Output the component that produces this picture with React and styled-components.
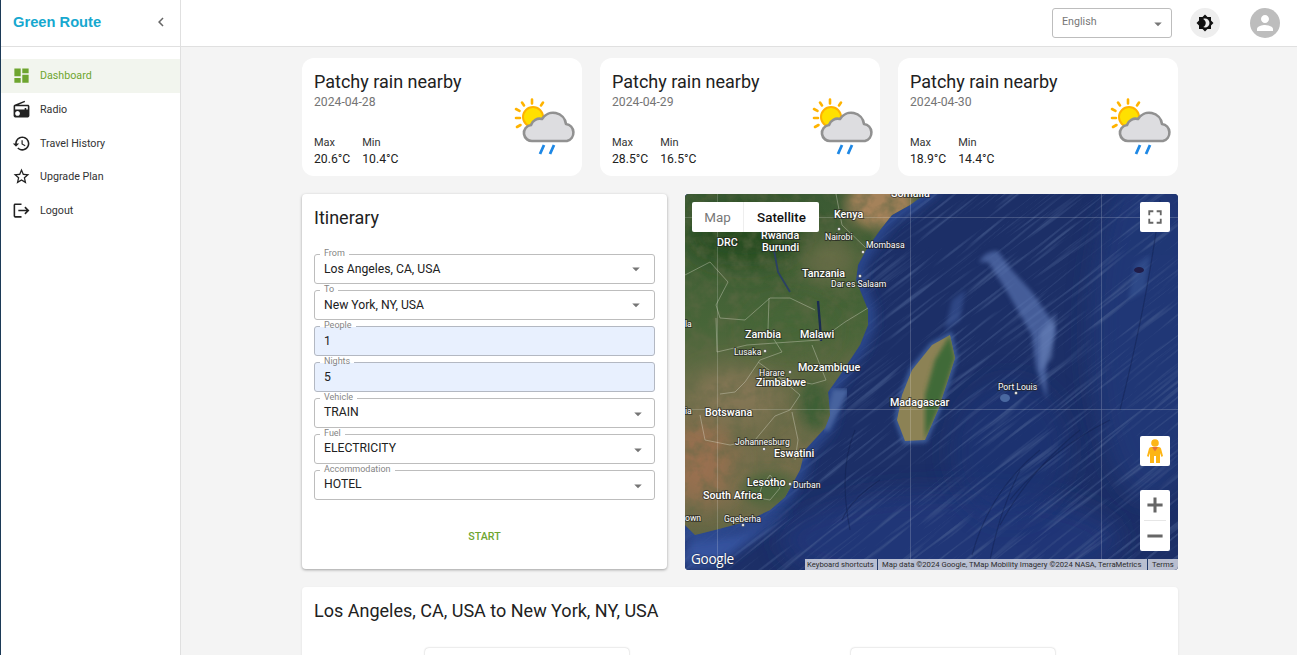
import { styled, createGlobalStyle } from 'styled-components';

const GlobalStyle = createGlobalStyle`
  html, body {
    margin: 0;
    height: 100%;
    overflow: hidden;
    background: #f4f4f4;
    font-family: Roboto, "Liberation Sans", sans-serif;
    color: #212121;
  }
  * { box-sizing: border-box; }
`;

const Shell = styled.div`
  display: flex;
  height: 655px;
  overflow: hidden;
`;

const Sidebar = styled.aside`
  flex: 0 0 181px;
  height: 100%;
  background: #fff;
  border-left: 1px solid #1c3a57;
  border-right: 1px solid #e0e0e0;
`;

const Brand = styled.div`
  display: flex;
  align-items: center;
  justify-content: space-between;
  height: 47px;
  padding: 0 10px 3px 12px;
  border-bottom: 1px solid #e0e0e0;
`;

const BrandName = styled.span`
  font-family: "Liberation Sans", Arial, sans-serif;
  font-size: 14.7px;
  font-weight: 700;
  color: #17a8cf;
`;

const Nav = styled.nav`
  padding-top: 12px;
`;

const NavItem = styled.div`
  display: flex;
  align-items: center;
  gap: 9px;
  height: 34px;
  padding: 0 0 2px 11px;
  font-size: 10.7px;
  color: ${(p) => (p.$active ? '#6ea52f' : '#333')};
  background: ${(p) => (p.$active ? '#f2f5ee' : 'transparent')};
  margin-bottom: ${(p) => (p.$tight ? '-1px' : '0')};
`;

const Icon = styled.svg`
  display: block;
  flex: none;
  fill: ${(p) => p.$color || 'currentColor'};
`;

const Column = styled.div`
  flex: 1;
  min-width: 0;
  display: flex;
  flex-direction: column;
`;

const TopBar = styled.header`
  flex: none;
  display: flex;
  justify-content: flex-end;
  align-items: flex-start;
  height: 47px;
  padding: 8px 17px 0 0;
  background: #fff;
  border-bottom: 1px solid #e0e0e0;
`;

const LangSelect = styled.div`
  display: flex;
  justify-content: space-between;
  width: 120px;
  height: 30px;
  padding: 6px 4px 0 9px;
  border: 1px solid #bdbdbd;
  border-radius: 3px;
  font-size: 10.7px;
  color: #777;
  line-height: 13px;
`;

const RoundButton = styled.div`
  display: flex;
  align-items: center;
  justify-content: center;
  width: 30px;
  height: 30px;
  margin-left: ${(p) => p.$gap};
  border-radius: 50%;
  background: ${(p) => p.$bg};
`;

const Content = styled.main`
  flex: 1;
  width: 876px;
  margin: 0 auto;
  padding: 11px 0 0 2px;
  box-sizing: content-box;
`;

const WeatherRow = styled.div`
  display: grid;
  grid-template-columns: repeat(3, 280px);
  gap: 18px;
`;

const WeatherCard = styled.div`
  display: flex;
  justify-content: space-between;
  height: 118px;
  padding: 12px 5px 0 12px;
  background: #fff;
  border-radius: 12px;
`;

const WeatherTitle = styled.div`
  font-size: 18px;
  line-height: 24px;
  color: #212121;
`;

const WeatherDate = styled.div`
  font-size: 12.2px;
  line-height: 16px;
  color: #757575;
`;

const Temps = styled.div`
  display: flex;
  gap: 12px;
  margin-top: 26px;
  font-size: 12.2px;
`;

const TempLabel = styled.div`
  font-size: 11px;
  line-height: 13px;
  color: #333;
`;

const TempValue = styled.div`
  margin-top: 3px;
  line-height: 15px;
  color: #212121;
`;

const WeatherArt = styled.svg`
  flex: none;
  margin-top: 26px;
`;

const MiddleRow = styled.div`
  display: flex;
  gap: 18px;
  margin-top: 18px;
`;

const ItineraryCard = styled.section`
  flex: 0 0 365px;
  height: 375px;
  padding: 12px;
  background: #fff;
  border-radius: 4px;
  box-shadow: 0 1px 3px rgba(0, 0, 0, 0.35);
`;

const CardTitle = styled.h2`
  margin: 0;
  font-size: 18px;
  font-weight: 400;
  line-height: 24px;
  color: #212121;
`;

const Fields = styled.div`
  display: flex;
  flex-direction: column;
  gap: 6px;
  margin-top: 24px;
`;

const Field = styled.div`
  position: relative;
  display: flex;
  align-items: center;
  justify-content: space-between;
  height: 30px;
  padding: ${(p) => (p.$compact ? '0 7px 3px 9px' : '0 9px 0 9px')};
  border: 1px solid ${(p) => (p.$filled ? '#b3b8c2' : '#bdbdbd')};
  border-radius: 3px;
  background: ${(p) => (p.$filled ? '#e8f0fe' : '#fff')};
  font-size: 12.2px;
  color: #212121;
`;

const FieldLabel = styled.span`
  position: absolute;
  left: 5px;
  top: -7px;
  padding: 0 4px;
  font-size: 9px;
  line-height: 11px;
  color: #858585;
  background: linear-gradient(#fff 0 7px, ${(p) => (p.$filled ? '#e8f0fe' : '#fff')} 7px);
`;

const FieldArrow = styled(Icon)`
  margin-top: ${(p) => (p.$compact ? '4px' : '0')};
`;

const StartButton = styled.div`
  margin-top: 30px;
  text-align: center;
  font-size: 10.7px;
  font-weight: 500;
  line-height: 14px;
  color: #6ea52f;
`;

const MapFrame = styled.div`
  position: relative;
  flex: 0 0 493px;
  height: 376px;
  border-radius: 4px;
  overflow: hidden;
  background: #1c2f66;
`;

const MapArt = styled.svg`
  display: block;
`;

const PlaceLabel = styled.text`
  font-family: Roboto, sans-serif;
  font-size: ${(p) => (p.$minor ? '8.6px' : '10.7px')};
  font-weight: ${(p) => (p.$minor ? 400 : 500)};
  fill: #fff;
  stroke: rgba(30, 30, 30, 0.6);
  stroke-width: 2px;
  paint-order: stroke;
`;

const MapTypeControl = styled.div`
  position: absolute;
  left: 7px;
  top: 8px;
  display: flex;
  height: 30px;
  background: #fff;
  border-radius: 2px;
  font-size: 13.4px;
  line-height: 32px;
`;

const MapTypeOption = styled.div`
  width: ${(p) => p.$width};
  text-align: center;
  color: ${(p) => (p.$active ? '#111' : '#777')};
  font-weight: ${(p) => (p.$active ? 500 : 400)};
  border-right: ${(p) => (p.$active ? 'none' : '1px solid #eee')};
`;

const MapButton = styled.div`
  position: absolute;
  right: 8px;
  top: ${(p) => p.$top};
  display: flex;
  flex-direction: column;
  align-items: center;
  justify-content: center;
  width: 30px;
  height: ${(p) => p.$height || '30px'};
  background: #fff;
  border-radius: 2px;
`;

const ZoomSlot = styled.div`
  display: flex;
  align-items: center;
  justify-content: center;
  height: 30px;
`;

const ZoomDivider = styled.div`
  flex: none;
  width: 22px;
  height: 1px;
  background: #e6e6e6;
`;

const GoogleMark = styled.span`
  position: absolute;
  left: 6px;
  bottom: 2px;
  font-family: "Open Sans", sans-serif;
  font-size: 13.6px;
  font-weight: 400;
  letter-spacing: -0.3px;
  color: #fff;
  text-shadow: 0 0 2px rgba(0, 0, 0, 0.7);
`;

const Attribution = styled.div`
  position: absolute;
  right: 0;
  bottom: 0;
  display: flex;
  width: 373px;
  height: 11px;
  font-family: Roboto, sans-serif;
  font-size: 7.7px;
  line-height: 11px;
  color: #2b2b2b;
  background: rgba(220, 222, 230, 0.82);
`;

const AttributionPart = styled.span`
  padding: 0 0 0 ${(p) => p.$pad || '4px'};
  width: ${(p) => p.$width};
  white-space: nowrap;
  border-right: ${(p) => (p.$last ? 'none' : '1px solid #223a6b')};
`;

const RouteCard = styled.section`
  height: 120px;
  margin-top: 17px;
  padding: 12px;
  background: #fff;
  border-radius: 4px;
  box-shadow: 0 1px 3px rgba(0, 0, 0, 0.08);
`;

const RouteStops = styled.div`
  display: flex;
  justify-content: space-between;
  margin-top: 25px;
  padding: 0 111px;
`;

const StopCard = styled.div`
  width: 204px;
  height: 60px;
  border-radius: 4px;
  box-shadow: 0 0 2px rgba(0, 0, 0, 0.28);
`;

const PATHS = {
  dashboard: 'M3 13h8V3H3v10zm0 8h8v-6H3v6zm10 0h8V11h-8v10zm0-18v6h8V3h-8z',
  radio: 'M3.24 6.15C2.51 6.43 2 7.17 2 8v12c0 1.1.89 2 2 2h16c1.11 0 2-.9 2-2V8c0-1.11-.89-2-2-2H8.3l8.26-3.34L15.88 1 3.24 6.15zM7 20c-1.66 0-3-1.34-3-3s1.34-3 3-3 3 1.34 3 3-1.34 3-3 3zm13-8h-2v-2h-2v2H4V8h16v4z',
  history: 'M13 3c-4.97 0-9 4.03-9 9H1l3.89 3.89.07.14L9 12H6c0-3.87 3.13-7 7-7s7 3.13 7 7-3.13 7-7 7c-1.93 0-3.68-.79-4.94-2.06l-1.42 1.42C8.27 19.99 10.51 21 13 21c4.97 0 9-4.03 9-9s-4.03-9-9-9zm-1 5v5l4.28 2.54.72-1.21-3.5-2.08V8H12z',
  star: 'M22 9.24l-7.19-.62L12 2 9.19 8.63 2 9.24l5.46 4.73L5.82 21 12 17.27 18.18 21l-1.63-7.03L22 9.24zM12 15.4l-3.76 2.27 1-4.28-3.32-2.88 4.38-.38L12 6.1l1.71 4.04 4.38.38-3.32 2.88 1 4.28L12 15.4z',
  logout: 'M17 7l-1.41 1.41L18.17 11H8v2h10.17l-2.58 2.58L17 17l5-5zM4 5h8V3H4c-1.1 0-2 .9-2 2v14c0 1.1.9 2 2 2h8v-2H4V5z',
  chevron: 'M15.41 7.41L14 6l-6 6 6 6 1.41-1.41L10.83 12z',
  drop: 'M7 10l5 5 5-5z',
  theme: 'M20 8.69V4h-4.69L12 .69 8.69 4H4v4.69L.69 12 4 15.31V20h4.69L12 23.31 15.31 20H20v-4.69L23.31 12 20 8.69zM12 18c-.89 0-1.74-.2-2.5-.55C11.56 16.5 13 14.42 13 12s-1.44-4.5-3.5-5.45C10.26 6.2 11.11 6 12 6c3.31 0 6 2.69 6 6s-2.69 6-6 6z',
  person: 'M12 12c2.21 0 4-1.79 4-4s-1.79-4-4-4-4 1.79-4 4 1.79 4 4 4zm0 2c-2.67 0-8 1.34-8 4v2h16v-2c0-2.66-5.33-4-8-4z',
  fullscreen: 'M4 4h6v2.2H6.2V10H4V4zm10 0h6v6h-2.2V6.2H14V4zM4 14h2.2v3.8H10V20H4v-6zm13.8 0H20v6h-6v-2.2h3.800V14z',
  plus: 'M19 13.4h-5.6V19h-2.8v-5.6H5v-2.8h5.6V5h2.8v5.6H19z',
  minus: 'M5 10.6h14v2.8H5z',
};

function MuiIcon({ name, size = 19, color }) {
  return (
    <Icon viewBox="0 0 24 24" width={size} height={size} $color={color}>
      <path d={PATHS[name]} />
    </Icon>
  );
}

const NAV_ITEMS = [
  { label: 'Dashboard', icon: 'dashboard', active: true },
  { label: 'Radio', icon: 'radio' },
  { label: 'Travel History', icon: 'history', tight: true },
  { label: 'Upgrade Plan', icon: 'star' },
  { label: 'Logout', icon: 'logout' },
];

const FORECAST = [
  { date: '2024-04-28', max: '20.6°C', min: '10.4°C' },
  { date: '2024-04-29', max: '28.5°C', min: '16.5°C' },
  { date: '2024-04-30', max: '18.9°C', min: '14.4°C' },
];

const FIELDS = [
  { label: 'From', value: 'Los Angeles, CA, USA', select: true },
  { label: 'To', value: 'New York, NY, USA', select: true },
  { label: 'People', value: '1', filled: true },
  { label: 'Nights', value: '5', filled: true },
  { label: 'Vehicle', value: 'TRAIN', select: true, compact: true },
  { label: 'Fuel', value: 'ELECTRICITY', select: true, compact: true },
  { label: 'Accommodation', value: 'HOTEL', select: true, compact: true },
];

const PLACES = [
  ['Somalia', 891, 197],
  ['Kenya', 834, 218],
  ['Nairobi', 825, 240, true],
  ['Mombasa', 866, 248, true],
  ['DRC', 717, 246],
  ['Rwanda', 761, 239],
  ['Burundi', 762, 251],
  ['Tanzania', 802, 277],
  ['Dar es Salaam', 831, 287, true],
  ['Zambia', 745, 338],
  ['Malawi', 800, 338],
  ['Lusaka', 734, 355, true],
  ['Harare', 759, 376, true],
  ['Mozambique', 798, 371],
  ['Zimbabwe', 756, 386],
  ['Botswana', 705, 416],
  ['Madagascar', 890, 406],
  ['Port Louis', 998, 390, true],
  ['Johannesburg', 735, 445, true],
  ['Eswatini', 774, 457],
  ['Lesotho', 747, 486],
  ['Durban', 793, 488, true],
  ['South Africa', 703, 499],
  ['Gqeberha', 724, 522, true],
  ['own', 685, 521, true],
  ['la', 685, 327, true],
  ['ia', 685, 414, true],
];

const CITY_DOTS = [
  [839, 229], [863, 252], [860, 276], [765, 351], [790, 372],
  [764, 449], [790, 484], [743, 525], [1016, 393],
];

const AFRICA = 'M925 194 L910 205 L892 215 L880 230 L866 250 L858 265 L856 280 L862 295 L868 310 L868 325 L860 345 L850 360 L838 378 L828 392 L830 415 L825 428 L805 450 L800 470 L785 497 L770 510 L745 522 L715 530 L695 535 L685 525 L685 194 Z';
const MADAGASCAR = 'M950 335 L955 358 L948 380 L938 410 L925 440 L905 441 L897 420 L902 395 L912 370 L932 345 Z';

const BORDERS = [
  'M685 275 L710 262 L728 282 L716 305 L720 318 L745 320 L770 298 L790 298 L815 310',
  'M716 318 L717 352 L747 345 L790 342 L820 340 L845 322 L868 308',
  'M769 298 L768 330 L782 352 L760 360 L745 382 L735 392 L720 394',
  'M812 345 L826 380 L812 384 L780 378 L758 362',
  'M780 378 L800 395 L790 410 L775 416 L755 440 L730 445 L705 440 L700 415',
  'M792 412 L798 440 L795 460',
  'M836 194 L842 225 L866 248',
  'M762 486 L770 475 L780 488 L770 500 L758 498 Z',
];

const RIDGES = [
  'M1160 200 Q1150 290 1120 410', 'M1110 420 Q1050 450 1010 500', 'M1080 430 Q1030 470 1000 525',
  'M1040 450 Q990 490 972 555', 'M1020 470 Q1000 510 990 560', 'M880 480 Q850 500 842 520',
  'M855 430 Q838 470 850 530',
];

function WeatherIcon() {
  return (
    <WeatherArt viewBox="0 0 64 64" width="64" height="64">
      <g stroke="#ffb300" strokeWidth="2.6" strokeLinecap="round">
        <path d="M19 3.500v4M9 6.500l2 3M30 6.500l-2 3M3 13l3.500 1.800M3 22h4M4 31l3.500-2" />
      </g>
      <circle cx="20" cy="21" r="10" fill="#ffe000" stroke="#ffb300" strokeWidth="2" />
      <path
        d="M20 45 a8 8 0 0 1 -2 -16 a9 9 0 0 1 11 -6 a13 13 0 0 1 24 5 a8.700 8.700 0 0 1 1 17 Z"
        fill="#dddde0"
        stroke="#919191"
        strokeWidth="2.600"
        strokeLinejoin="round"
      />
      <path d="M31 49l-4 9M41 49l-4 9" stroke="#1e88e5" strokeWidth="2.800" />
    </WeatherArt>
  );
}

function SatelliteMap() {
  return (
    <MapArt viewBox="685 194 493 376" width="493" height="376">
      <defs>
        <filter id="soft6" x="-30%" y="-30%" width="160%" height="160%"><feGaussianBlur stdDeviation="6" /></filter>
        <filter id="soft12" x="-50%" y="-50%" width="200%" height="200%"><feGaussianBlur stdDeviation="12" /></filter>
        <filter id="soft2"><feGaussianBlur stdDeviation="2" /></filter>
        <filter id="soft05"><feGaussianBlur stdDeviation="0.5" /></filter>
        <filter id="landGrain" x="0" y="0" width="100%" height="100%">
          <feTurbulence type="fractalNoise" baseFrequency="0.07" numOctaves="4" seed="5" />
          <feColorMatrix values="0 0 0 0 0.12  0 0 0 0 0.14  0 0 0 0 0.06  0 0 0 2.2 -0.85" />
        </filter>
        <filter id="oceanStreaks" x="0" y="0" width="100%" height="100%">
          <feTurbulence type="fractalNoise" baseFrequency="0.012 0.3" numOctaves="2" seed="9" />
          <feColorMatrix values="0 0 0 0 0.07  0 0 0 0 0.12  0 0 0 0 0.29  0 0 0 4 -2.1" />
        </filter>
        <linearGradient id="landFade" x1="0" y1="0" x2="0" y2="1">
          <stop offset="0" stopColor="#3b5a33" />
          <stop offset="0.35" stopColor="#476538" />
          <stop offset="0.55" stopColor="#6c6d49" />
          <stop offset="0.8" stopColor="#796e4c" />
          <stop offset="1" stopColor="#4f5f3d" />
        </linearGradient>
        <clipPath id="africaClip"><path d={AFRICA} /></clipPath>
        <clipPath id="madagascarClip"><path d={MADAGASCAR} /></clipPath>
      </defs>

      <rect x="685" y="194" width="493" height="376" fill="#1c2f67" />
      <ellipse cx="1150" cy="330" rx="60" ry="170" fill="#213b7d" opacity="0.7" filter="url(#soft12)" />
      <ellipse cx="950" cy="540" rx="170" ry="50" fill="#21397c" opacity="0.8" filter="url(#soft12)" />
      <ellipse cx="1010" cy="450" rx="60" ry="70" fill="#1f3677" opacity="0.6" filter="url(#soft12)" />

      <g transform="rotate(-38 930 380)" opacity="0.55">
        <rect x="480" y="-60" width="900" height="900" filter="url(#oceanStreaks)" />
      </g>

      {/* shallow water along the coasts */}
      <path d={AFRICA} fill="none" stroke="#2f4d96" strokeWidth="12" filter="url(#soft6)" />
      <path d="M685 540 L740 532 L790 510 L720 565 L685 570 Z" fill="#34539f" filter="url(#soft6)" />
      <path d="M835 392 L826 430 L845 392 Z" fill="#46639f" stroke="#46639f" strokeWidth="6" filter="url(#soft2)" />
      <path d={MADAGASCAR} fill="none" stroke="#40609f" strokeWidth="5" filter="url(#soft2)" />
      <path
        d="M979 262 Q986 250 998 251 L1010 268 L1032 292 L1050 318 L1056 330 L1046 362 L1047 400 L1036 368 L1032 335 L1006 290 L988 262 Z"
        fill="#5c77b5"
        opacity="0.65"
        filter="url(#soft2)"
      />
      <path d="M1040 332 L1056 312 L1052 358 L1040 372 Z" fill="#7089c0" opacity="0.5" filter="url(#soft2)" />
      <path d="M952 300 L965 290 L960 320 L945 330 Z" fill="#4b6ab0" opacity="0.4" filter="url(#soft2)" />
      <path d="M1135 265 L1150 255 L1145 290 L1128 300 Z" fill="#41609f" opacity="0.45" filter="url(#soft2)" />
      <ellipse cx="1139" cy="270" rx="5" ry="3" fill="#201c48" />
      <ellipse cx="1005" cy="398" rx="5" ry="4" fill="#4a68a0" filter="url(#soft05)" />

      {RIDGES.map((d) => (
        <path key={d} d={d} fill="none" stroke="#0f1c49" strokeWidth="1.2" opacity="0.4" filter="url(#soft05)" />
      ))}

      <g clipPath="url(#africaClip)">
        <rect x="685" y="194" width="260" height="376" fill="url(#landFade)" />
        <ellipse cx="745" cy="235" rx="60" ry="32" fill="#22491f" opacity="0.8" filter="url(#soft12)" />
        <ellipse cx="880" cy="205" rx="34" ry="24" fill="#a5825a" filter="url(#soft6)" />
        <ellipse cx="830" cy="260" rx="30" ry="24" fill="#7a7550" opacity="0.7" filter="url(#soft12)" />
        <ellipse cx="700" cy="460" rx="32" ry="42" fill="#99704f" filter="url(#soft12)" />
        <ellipse cx="735" cy="395" rx="45" ry="26" fill="#847654" filter="url(#soft12)" />
        <ellipse cx="790" cy="330" rx="40" ry="24" fill="#466639" opacity="0.8" filter="url(#soft12)" />
        <ellipse cx="815" cy="405" rx="16" ry="26" fill="#3d5e36" filter="url(#soft6)" />
        <ellipse cx="770" cy="490" rx="28" ry="18" fill="#4c663b" filter="url(#soft6)" />
        <rect x="685" y="194" width="260" height="376" filter="url(#landGrain)" opacity="0.55" />
      </g>

      <g clipPath="url(#madagascarClip)">
        <rect x="890" y="330" width="70" height="115" fill="#8c8255" />
        <path d="M950 335 L955 358 L938 410 L925 440 L925 395 L935 360 Z" fill="#3f6a38" filter="url(#soft2)" />
      </g>

      <path d="M774 250 L778 272 L790 292" fill="none" stroke="#2b4063" strokeWidth="1.800" />
      <path d="M818 301 L820 325 L821 341" fill="none" stroke="#1a2c52" strokeWidth="2.400" />

      <g fill="none" stroke="#e8e6d8" strokeWidth="0.7" opacity="0.5">
        {BORDERS.map((d) => <path key={d} d={d} />)}
      </g>

      <g stroke="#fff" strokeWidth="0.6" opacity="0.3">
        <path d="M685 217.500H1178M685 409.500H1178M717.500 194V570M910.500 194V570M1101.500 194V570" />
      </g>

      {CITY_DOTS.map(([x, y]) => (
        <circle key={`${x}-${y}`} cx={x} cy={y} r="1.500" fill="#fff" stroke="#333" strokeWidth="0.5" />
      ))}

      {PLACES.map(([name, x, y, minor]) => (
        <PlaceLabel key={name} x={x} y={y} $minor={minor}>{name}</PlaceLabel>
      ))}
    </MapArt>
  );
}

function Pegman() {
  return (
    <svg viewBox="0 0 16 24" width="16" height="24">
      <circle cx="8" cy="4" r="3.800" fill="#fdb515" />
      <path d="M4 8h8q1.500 0 2 1.500L16 17l-1.500 1-1.500-4v10H9V17H7v7H3V14L1.500 18 0 17l2-7.500Q2.500 8 4 8Z" fill="#fdb515" />
      <path d="M5 8 8 12.500 11 8Z" fill="#e8703a" />
    </svg>
  );
}

export default function App() {
  return (
    <>
      <GlobalStyle />
      <Shell>
        <Sidebar>
          <Brand>
            <BrandName>Green Route</BrandName>
            <MuiIcon name="chevron" size={18} color="#666" />
          </Brand>
          <Nav>
            {NAV_ITEMS.map((item) => (
              <NavItem key={item.label} $active={item.active} $tight={item.tight}>
                <MuiIcon name={item.icon} color={item.active ? '#6ea52f' : '#222'} />
                {item.label}
              </NavItem>
            ))}
          </Nav>
        </Sidebar>

        <Column>
          <TopBar>
            <LangSelect>
              English
              <MuiIcon name="drop" size={18} color="#777" />
            </LangSelect>
            <RoundButton $gap="18px" $bg="#eeeeee">
              <MuiIcon name="theme" size={18} color="#111" />
            </RoundButton>
            <RoundButton $gap="30px" $bg="#bdbdbd">
              <MuiIcon name="person" size={24} color="#fff" />
            </RoundButton>
          </TopBar>

          <Content>
            <WeatherRow>
              {FORECAST.map((day) => (
                <WeatherCard key={day.date}>
                  <div>
                    <WeatherTitle>Patchy rain nearby</WeatherTitle>
                    <WeatherDate>{day.date}</WeatherDate>
                    <Temps>
                      <div>
                        <TempLabel>Max</TempLabel>
                        <TempValue>{day.max}</TempValue>
                      </div>
                      <div>
                        <TempLabel>Min</TempLabel>
                        <TempValue>{day.min}</TempValue>
                      </div>
                    </Temps>
                  </div>
                  <WeatherIcon />
                </WeatherCard>
              ))}
            </WeatherRow>

            <MiddleRow>
              <ItineraryCard>
                <CardTitle>Itinerary</CardTitle>
                <Fields>
                  {FIELDS.map((field) => (
                    <Field key={field.label} $filled={field.filled} $compact={field.compact}>
                      <FieldLabel $filled={field.filled}>{field.label}</FieldLabel>
                      {field.value}
                      {field.select && (
                        <FieldArrow viewBox="0 0 24 24" width="18" height="18" $color="#757575" $compact={field.compact}>
                          <path d={PATHS.drop} />
                        </FieldArrow>
                      )}
                    </Field>
                  ))}
                </Fields>
                <StartButton>START</StartButton>
              </ItineraryCard>

              <MapFrame>
                <SatelliteMap />
                <MapTypeControl>
                  <MapTypeOption $width="52px">Map</MapTypeOption>
                  <MapTypeOption $width="75px" $active>Satellite</MapTypeOption>
                </MapTypeControl>
                <MapButton $top="8px">
                  <MuiIcon name="fullscreen" size={20} color="#666" />
                </MapButton>
                <MapButton $top="242px">
                  <Pegman />
                </MapButton>
                <MapButton $top="296px" $height="61px">
                  <ZoomSlot><MuiIcon name="plus" size={26} color="#666" /></ZoomSlot>
                  <ZoomDivider />
                  <ZoomSlot><MuiIcon name="minus" size={26} color="#666" /></ZoomSlot>
                </MapButton>
                <GoogleMark>Google</GoogleMark>
                <Attribution>
                  <AttributionPart $pad="2px" $width="73px">Keyboard shortcuts</AttributionPart>
                  <AttributionPart $width="270px">Map data ©2024 Google, TMap Mobility Imagery ©2024 NASA, TerraMetrics</AttributionPart>
                  <AttributionPart $last>Terms</AttributionPart>
                </Attribution>
              </MapFrame>
            </MiddleRow>

            <RouteCard>
              <CardTitle>Los Angeles, CA, USA to New York, NY, USA</CardTitle>
              <RouteStops>
                <StopCard />
                <StopCard />
              </RouteStops>
            </RouteCard>
          </Content>
        </Column>
      </Shell>
    </>
  );
}
